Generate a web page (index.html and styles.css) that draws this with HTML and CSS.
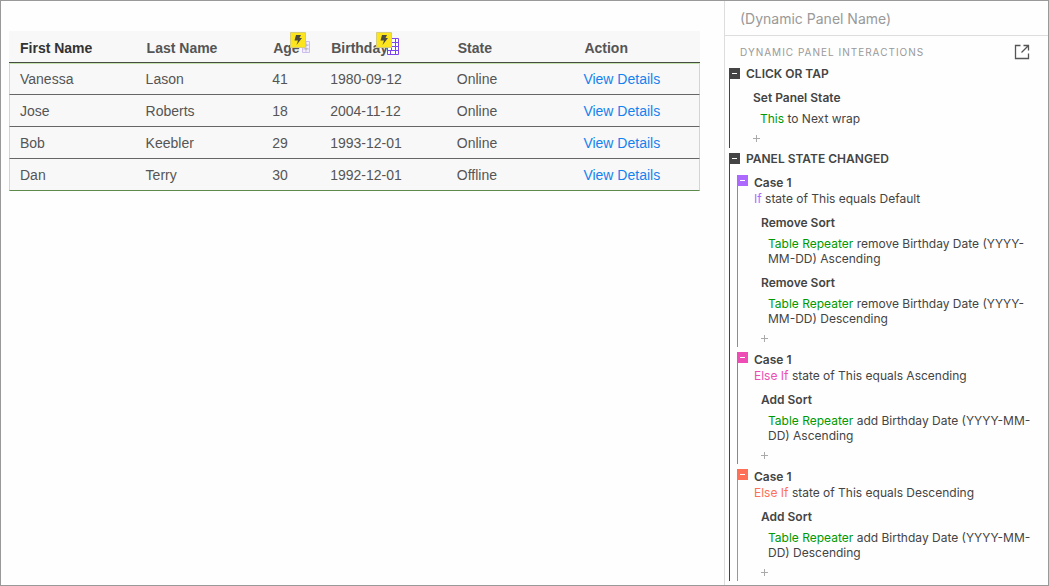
FILE: index.html
```html
<!DOCTYPE html>
<html lang="en">
<head>
<meta charset="utf-8">
<title>Dynamic Panel Interactions</title>
<link rel="stylesheet" href="styles.css">
</head>
<body>
<div class="frame">
  <main class="canvas">
    <table class="table">
      <colgroup>
        <col class="col-wide"><col class="col-wide"><col class="col-age"><col class="col-wide"><col class="col-wide"><col class="col-wide">
      </colgroup>
      <thead>
        <tr>
          <th class="current" scope="col">First Name</th>
          <th scope="col">Last Name</th>
          <th scope="col"><span class="sortable">Age
            <svg class="grid-small" viewBox="0 0 8 12" aria-hidden="true"><path d="M.5.5h7v11h-7zM.5 4h7M.5 8h7M4 .5v11" fill="#f4f0fb" stroke="#cbbdec"/><path d="M4 2.500L6 5H2zM4 9.500L6 7H2z" fill="#bbb"/></svg>
            <svg class="bolt bolt-age" viewBox="0 0 16 16" aria-hidden="true"><path d="M.5.5h15v15H.5z" fill="#fce51c" stroke="#d8cd78"/><path d="M6 3h5L9.500 6H12l-5.500 7L8 8.500H4.500z" fill="#4b4a3c"/></svg></span></th>
          <th scope="col"><span class="sortable">Birthday
            <svg class="grid-large" viewBox="0 0 12 17" aria-hidden="true"><path d="M.5.5h11v16H.5zM.5 4.500h11M.5 12.500h11M3.500 12v4.500M8.500.5v16M4.500 4.500v8M4.500 8.500h7" fill="#fff" stroke="#7d45ee"/></svg>
            <svg class="bolt bolt-birthday" viewBox="0 0 16 16" aria-hidden="true"><path d="M.5.5h15v15H.5z" fill="#fce51c" stroke="#d8cd78"/><path d="M6 3h5L9.500 6H12l-5.500 7L8 8.500H4.500z" fill="#4b4a3c"/></svg></span></th>
          <th scope="col">State</th>
          <th scope="col">Action</th>
        </tr>
      </thead>
      <tbody>
        <tr><td>Vanessa</td><td>Lason</td><td>41</td><td>1980-09-12</td><td>Online</td><td><a href="#">View Details</a></td></tr>
        <tr><td>Jose</td><td>Roberts</td><td>18</td><td>2004-11-12</td><td>Online</td><td><a href="#">View Details</a></td></tr>
        <tr><td>Bob</td><td>Keebler</td><td>29</td><td>1993-12-01</td><td>Online</td><td><a href="#">View Details</a></td></tr>
        <tr><td>Dan</td><td>Terry</td><td>30</td><td>1992-12-01</td><td>Offline</td><td><a href="#">View Details</a></td></tr>
      </tbody>
    </table>
  </main>

  <aside class="panel">
    <header class="panel-name">(Dynamic Panel Name)</header>
    <div class="section-head">
      <h2 class="section-title">DYNAMIC PANEL INTERACTIONS</h2>
      <button class="open" type="button" aria-label="Open interaction editor">
        <svg viewBox="0 0 16 16" width="16" height="16" aria-hidden="true"><path d="M6.500 1.500h-5v13h13v-5M9.500 1.500h5v5M14.500 1.500L7.500 8.500" fill="none" stroke="#555" stroke-width="1.300"/></svg>
      </button>
    </div>

    <div class="events">
      <section class="event">
        <div class="event-head"><button class="toggle" type="button" aria-label="Collapse"></button><h3 class="event-title">CLICK OR TAP</h3></div>
        <div class="actions">
          <h5 class="action">Set Panel State</h5>
          <p class="target"><span class="widget">This</span> to Next wrap</p>
          <button class="add" type="button" aria-label="Add target"></button>
        </div>
      </section>

      <section class="event">
        <div class="event-head"><button class="toggle" type="button" aria-label="Collapse"></button><h3 class="event-title">PANEL STATE CHANGED</h3></div>
        <div class="cases">
          <section class="case purple">
            <div class="case-head"><button class="toggle" type="button" aria-label="Collapse"></button>
              <div><h4 class="case-title">Case 1</h4><p class="condition"><span class="keyword">If</span> state of This equals Default</p></div></div>
            <div class="actions">
              <h5 class="action">Remove Sort</h5>
              <p class="target"><span class="widget">Table Repeater</span> remove Birthday Date (YYYY-MM-DD) Ascending</p>
              <h5 class="action">Remove Sort</h5>
              <p class="target"><span class="widget">Table Repeater</span> remove Birthday Date (YYYY-MM-DD) Descending</p>
              <button class="add" type="button" aria-label="Add target"></button>
            </div>
          </section>
          <section class="case pink">
            <div class="case-head"><button class="toggle" type="button" aria-label="Collapse"></button>
              <div><h4 class="case-title">Case 1</h4><p class="condition"><span class="keyword">Else If</span> state of This equals Ascending</p></div></div>
            <div class="actions">
              <h5 class="action">Add Sort</h5>
              <p class="target"><span class="widget">Table Repeater</span> add Birthday Date (YYYY-MM-DD) Ascending</p>
              <button class="add" type="button" aria-label="Add target"></button>
            </div>
          </section>
          <section class="case coral">
            <div class="case-head"><button class="toggle" type="button" aria-label="Collapse"></button>
              <div><h4 class="case-title">Case 1</h4><p class="condition"><span class="keyword">Else If</span> state of This equals Descending</p></div></div>
            <div class="actions">
              <h5 class="action">Add Sort</h5>
              <p class="target"><span class="widget">Table Repeater</span> add Birthday Date (YYYY-MM-DD) Descending</p>
              <button class="add" type="button" aria-label="Add target"></button>
            </div>
          </section>
        </div>
      </section>
    </div>
  </aside>
</div>
</body>
</html>
```

FILE: styles.css
```css
* { box-sizing: border-box; }

body {
  margin: 0;
  background: #fefefe;
  color: #444;
  font-family: Inter, "Liberation Sans", sans-serif;
  font-size: 12px;
}

h2, h3, h4, h5, p { margin: 0; font-size: inherit; }

button {
  padding: 0;
  border: 0;
  background: none;
  cursor: pointer;
}

.frame {
  display: flex;
  min-height: 100vh;
  border: 1px solid #999;
}

/* Canvas with the data table */
.canvas { flex: 1; padding: 30px 24px 0 8px; }

.table {
  width: 100%;
  table-layout: fixed;
  border-collapse: separate;
  border-spacing: 0;
  background: #f8f8f8;
  color: #555;
  font: 14px/16px "Liberation Sans", Arial, sans-serif;
  text-align: left;
}

.col-age { width: 58px; }

.table th {
  height: 32px;
  padding: 2px 0 0 11px;
  border-bottom: 1px solid #484b44;
}
.table .current { color: #333; }

.table td {
  height: 32px;
  padding: 0 0 0 10px;
  border-bottom: 1px solid #666;
}
.table tbody tr:first-child td { border-top: 1px solid #c4e4ae; }
.table tbody td:first-child { border-left: 1px solid #c4e4ae; }
.table tbody td:last-child { border-right: 1px solid #c4e4ae; }
.table tbody tr:last-child td { border-bottom-color: #5c8a4a; }
.table a { color: #1482ee; text-decoration: none; }

.sortable { position: relative; }
.sortable svg { position: absolute; }
.bolt { top: -8px; width: 16px; height: 16px; }
.bolt-age { left: 17px; }
.bolt-birthday { left: 45px; }
.grid-small { top: 1px; left: 29px; width: 8px; height: 12px; }
.grid-large { top: -2px; left: 56px; width: 12px; height: 17px; }

/* Interactions panel */
.panel {
  flex: 0 0 324px;
  border-left: 1px solid #ddd;
}

.panel-name {
  padding: 9px 15px 7px;
  border-bottom: 1px solid #ddd;
  color: #999;
  font-size: 14px;
  line-height: 18px;
}

.section-head {
  display: flex;
  align-items: center;
  justify-content: space-between;
  height: 32px;
  padding: 0 18px 0 15px;
}
.section-title {
  color: #999;
  font-size: 10px;
  font-weight: 400;
  letter-spacing: 1px;
}
.open { width: 16px; height: 16px; }
.open svg { display: block; }

.events { display: grid; gap: 5px; padding: 0 14px 4px 4px; }

.event { border-left: 1px solid #444; }

.event-head { display: flex; gap: 6px; height: 12px; }
.event-title { font-weight: 600; line-height: 12px; }

.toggle {
  display: grid;
  place-items: center;
  flex: none;
  width: 11px;
  height: 11px;
  margin-left: -1px;
  background: #444;
}
.toggle::before { content: ""; width: 5px; height: 1px; background: #fff; }

.cases { display: grid; gap: 5px; padding: 10px 0 0 7px; }
.case { border-left: 1px solid; }
.case-head { display: flex; gap: 6px; line-height: 16px; }
.case-title { font-weight: 600; }

.purple { border-color: #ad68ff; }
.purple .toggle { background: #ad68ff; }
.purple .keyword { color: #ad68ff; }
.pink { border-color: #ed4db4; }
.pink .toggle { background: #ed4db4; }
.pink .keyword { color: #ed4db4; }
.coral { border-color: #ff7058; }
.coral .toggle { background: #ff7058; }
.coral .keyword { color: #ff7058; }

.actions { padding: 0 0 6px 23px; }
.case .actions { padding-bottom: 5px; }
.action { margin-top: 9px; font-weight: 600; line-height: 16px; }
.action:first-child { margin-top: 8px; }
.event > .actions .action { margin-top: 10px; }
.target { margin: 5px 0 0 7px; line-height: 15px; }
.widget { color: #090; }

.add {
  display: block;
  width: 7px;
  height: 8px;
  margin-top: 8px;
  background:
    linear-gradient(#aaa, #aaa) center / 7px 1px no-repeat,
    linear-gradient(#aaa, #aaa) center / 1px 7px no-repeat;
}
```
